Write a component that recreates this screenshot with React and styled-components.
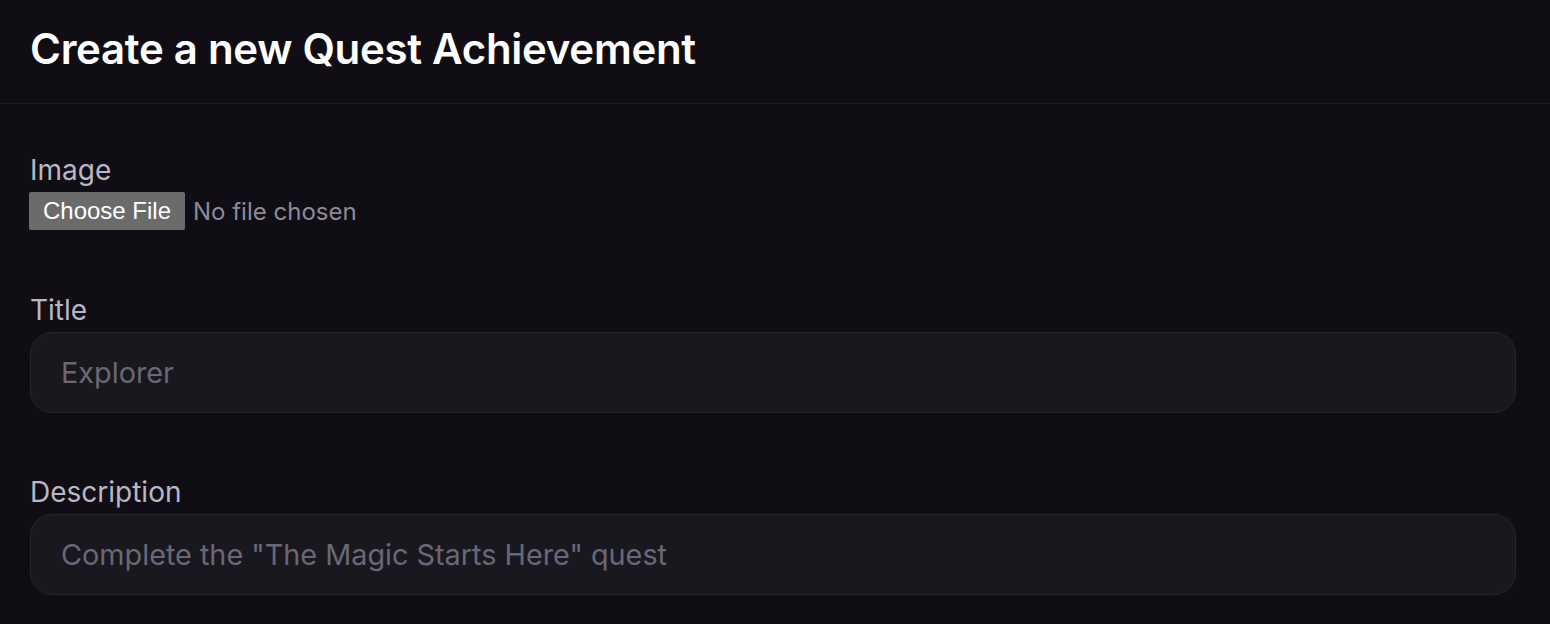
import React from "react";
import styled, { createGlobalStyle } from "styled-components";

const Global = createGlobalStyle`
  html, body { margin: 0; padding: 0; background: #100e14; }
  body { font-family: Inter, "Noto Sans", sans-serif; color: #b8b6c3; }
  * { box-sizing: border-box; }
`;

const Page = styled.div`
  width: 1550px;
  min-height: 624px;
  background: #100e14;
`;

const Header = styled.header`
  height: 104px;
  padding: 0 30px;
  display: flex;
  align-items: center;
  border-bottom: 1px solid #1e1c23;
`;

const Heading = styled.h1`
  margin: 0 0 6px;
  font-size: 42px;
  line-height: 50px;
  font-weight: 600;
  color: #ffffff;
  letter-spacing: -0.3px;
`;

const Body = styled.div`
  padding: 48px 34px 0 30px;
  display: flex;
  flex-direction: column;
  gap: 61.5px;
`;

const Field = styled.div`
  display: flex;
  flex-direction: column;
  gap: 4px;
`;

const Label = styled.label`
  font-size: 28px;
  line-height: 36px;
  color: #b9b7c4;
`;

const FileRow = styled.div`
  display: flex;
  align-items: center;
  gap: 8px;
  height: 38px;
`;

const FileButton = styled.button`
  height: 38px;
  width: 156px;
  margin-left: -1px;
  padding: 0;
  border: none;
  border-radius: 2px;
  background: #6b6b6b;
  color: #ffffff;
  font-family: "Liberation Sans", Arial, sans-serif;
  font-size: 24px;
`;

const FileName = styled.span`
  font-size: 24px;
  color: #8d8a98;
`;

const TextInput = styled.input`
  height: 81px;
  width: 100%;
  padding: 0 30px;
  border: 1px solid #26242b;
  border-radius: 22px;
  background: #1a181f;
  color: #e0dee8;
  font-family: Inter, "Noto Sans", sans-serif;
  font-size: 28.8px;
  outline: none;
  &::placeholder { color: #6a6776; }
`;

export default function App() {
  return (
    <>
      <Global />
      <Page>
        <Header>
          <Heading>Create a new Quest Achievement</Heading>
        </Header>
        <Body>
          <Field>
            <Label>Image</Label>
            <FileRow>
              <FileButton type="button">Choose File</FileButton>
              <FileName>No file chosen</FileName>
            </FileRow>
          </Field>
          <Field>
            <Label>Title</Label>
            <TextInput placeholder="Explorer" />
          </Field>
          <Field>
            <Label>Description</Label>
            <TextInput placeholder={'Complete the "The Magic Starts Here" quest'} />
          </Field>
        </Body>
      </Page>
    </>
  );
}
